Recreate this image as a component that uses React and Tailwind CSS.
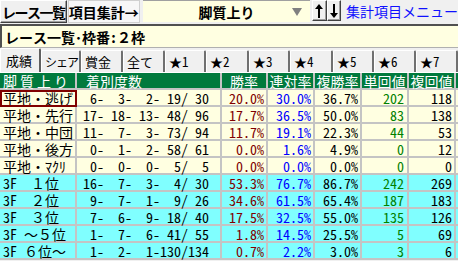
import React from "react";

const rows = [
  ["平地・逃げ", [6, 3, 2, 19, 30], "20.0%", "30.0%", "36.7%", "202", "118", false],
  ["平地・先行", [17, 18, 13, 48, 96], "17.7%", "36.5%", "50.0%", "83", "138", false],
  ["平地・中団", [11, 7, 3, 73, 94], "11.7%", "19.1%", "22.3%", "44", "53", false],
  ["平地・後方", [0, 1, 2, 58, 61], "0.0%", "1.6%", "4.9%", "0", "12", false],
  ["平地・ﾏｸﾘ", [0, 0, 0, 5, 5], "0.0%", "0.0%", "0.0%", "0", "0", false],
  ["3F　１位", [16, 7, 3, 4, 30], "53.3%", "76.7%", "86.7%", "242", "269", true],
  ["3F　２位", [9, 7, 1, 9, 26], "34.6%", "61.5%", "65.4%", "187", "183", true],
  ["3F　３位", [7, 6, 9, 18, 40], "17.5%", "32.5%", "55.0%", "135", "126", true],
  ["3F ～５位", [1, 7, 6, 41, 55], "1.8%", "14.5%", "25.5%", "5", "69", true],
  ["3F ６位～", [1, 2, 1, 130, 134], "0.7%", "2.2%", "3.0%", "3", "6", true],
];

const tabs = [
  ["シェア", "w-[40px]"],
  ["賞金", "w-[42px]"],
  ["全て", "w-[42px]"],
  ["★1", "w-[41px]"],
  ["★2", "w-[43px]"],
  ["★3", "w-[41px]"],
  ["★4", "w-[43px]"],
  ["★5", "w-[41px]"],
  ["★6", "w-[42px]"],
  ["★7", "w-[42px]"],
];

const pad = (n, w) => String(n).padStart(w, " ");

function counts(c) {
  return pad(c[0], 2) + "- " + pad(c[1], 2) + "- " + pad(c[2], 2) + "-" + pad(c[3], 3) + "/" + pad(c[4], 3);
}

function Arrow({ up }) {
  return (
    <svg width="8" height="14" viewBox="0 0 8 14">
      {up ? (
        <>
          <rect x="3" y="3" width="2" height="11" fill="#000" />
          <polygon points="4,0 8,5 0,5" fill="#000" />
        </>
      ) : (
        <>
          <rect x="3" y="0" width="2" height="11" fill="#000" />
          <polygon points="4,14 8,9 0,9" fill="#000" />
        </>
      )}
    </svg>
  );
}

export default function App() {
  const raised = "border border-t-white border-l-white border-r-[#404040] border-b-[#404040] shadow-[inset_-1px_-1px_0_#a0a0a0]";
  const cell = "border-r-2 border-b-2 border-[#c4c4c4] flex items-center";

  return (
    <div className="w-[458px] h-[261px] overflow-hidden bg-[#f0f0f0] text-[14px] leading-none text-black font-['Noto_Sans_Mono_CJK_JP','Noto_Sans_CJK_JP',monospace]">
      {/* top bar */}
      <div className="flex items-start h-[24px]">
        <div className={`w-[75px] h-[23px] flex items-center justify-center font-bold whitespace-nowrap text-[14px] tracking-[-1.5px] ${raised}`}>レース一覧</div>
        <div className="ml-[1px] w-[79px] h-[23px] flex items-center justify-center font-bold whitespace-nowrap bg-[#f7f7f7] border border-[#d0d0d0]">項目集計→</div>
        <div className="relative ml-[3px] w-[189px] h-[22px] bg-[#ffffe1] border-t border-[#a0a0a0] flex items-center justify-center font-bold">
          脚質上り
          <svg className="absolute right-[8px] top-[7px]" width="10" height="8" viewBox="0 0 10 8">
            <polygon points="0,0 10,0 5,8" fill="#808080" />
          </svg>
        </div>
        <div className={`ml-[2px] w-[16px] h-[21px] flex items-center justify-center ${raised}`}>
          <Arrow up />
        </div>
        <div className={`w-[16px] h-[21px] flex items-center justify-center ${raised}`}>
          <Arrow />
        </div>
        <div className="ml-[5px] h-[22px] flex items-center whitespace-nowrap text-[#1010ff]">集計項目メニュー</div>
      </div>

      {/* title */}
      <div className="h-[24px] bg-[#ffffe1] border-t-2 border-l-2 border-[#505050] border-b border-b-[#b0b0b0] flex items-center pl-[3px] font-bold whitespace-pre">
        レース一覧･枠番:２枠
      </div>

      {/* tabs */}
      <div className="flex items-end h-[25px] border-b border-white text-[13px]">
        <div className="w-[43px] h-[24px] flex items-center pl-[5px] bg-[#f0f0f0] border-t border-l border-white border-r-2 border-r-[#606060] rounded-t-[2px]">成績</div>
        {tabs.map(([t, w]) => (
          <div key={t} className={`${w} shrink-0 h-[22px] flex items-center pl-[3px] bg-[#f0f0f0] border-t border-l border-white border-r-2 border-r-[#707070] rounded-t-[2px] whitespace-nowrap ${t === "シェア" ? "text-[12px] tracking-[-1px]" : ""}`}>
            {t}
          </div>
        ))}
      </div>

      {/* table */}
      <div className="grid grid-cols-[77px_145px_46px_47px_47px_47px_47px_20px] auto-rows-[17px] w-[476px]">
        <div className={`${cell} bg-[#007a3d] text-white pl-[3px] tracking-[3px]`}>脚質上り</div>
        <div className={`${cell} bg-[#007a3d] text-white pl-[9px]`}>着別度数</div>
        <div className={`${cell} bg-[#007a3d] text-white justify-center`}>勝率</div>
        <div className={`${cell} bg-[#007a3d] text-white justify-center`}>連対率</div>
        <div className={`${cell} bg-[#007a3d] text-white justify-center`}>複勝率</div>
        <div className={`${cell} bg-[#007a3d] text-white justify-center`}>単回値</div>
        <div className={`${cell} bg-[#007a3d] text-white justify-center`}>複回値</div>
        <div className={`${cell} bg-[#007a3d]`}></div>
        {rows.map(([label, c, w, r, f, t, fk, cyan], i) => {
          const bg = cyan ? "bg-[#80ffff]" : "bg-[#ffffe1]";
          return (
            <React.Fragment key={label}>
              <div className={`${cell} ${bg} pl-[3px] whitespace-pre ${i === 0 ? "outline-2 -outline-offset-2 outline-[#800000]" : ""}`}>{label}</div>
              <div className={`${cell} ${bg} justify-end pr-[11px] whitespace-pre`}>{counts(c)}</div>
              <div className={`${cell} ${bg} justify-end pr-[2px] text-[#800000]`}>{w}</div>
              <div className={`${cell} ${bg} justify-end pr-[2px] text-[#0000ff]`}>{r}</div>
              <div className={`${cell} ${bg} justify-end pr-[2px]`}>{f}</div>
              <div className={`${cell} ${bg} justify-end pr-[3px] text-[#008000]`}>{t}</div>
              <div className={`${cell} ${bg} justify-end pr-[2px]`}>{fk}</div>
              <div className={`${cell} ${bg}`}></div>
            </React.Fragment>
          );
        })}
      </div>
    </div>
  );
}
